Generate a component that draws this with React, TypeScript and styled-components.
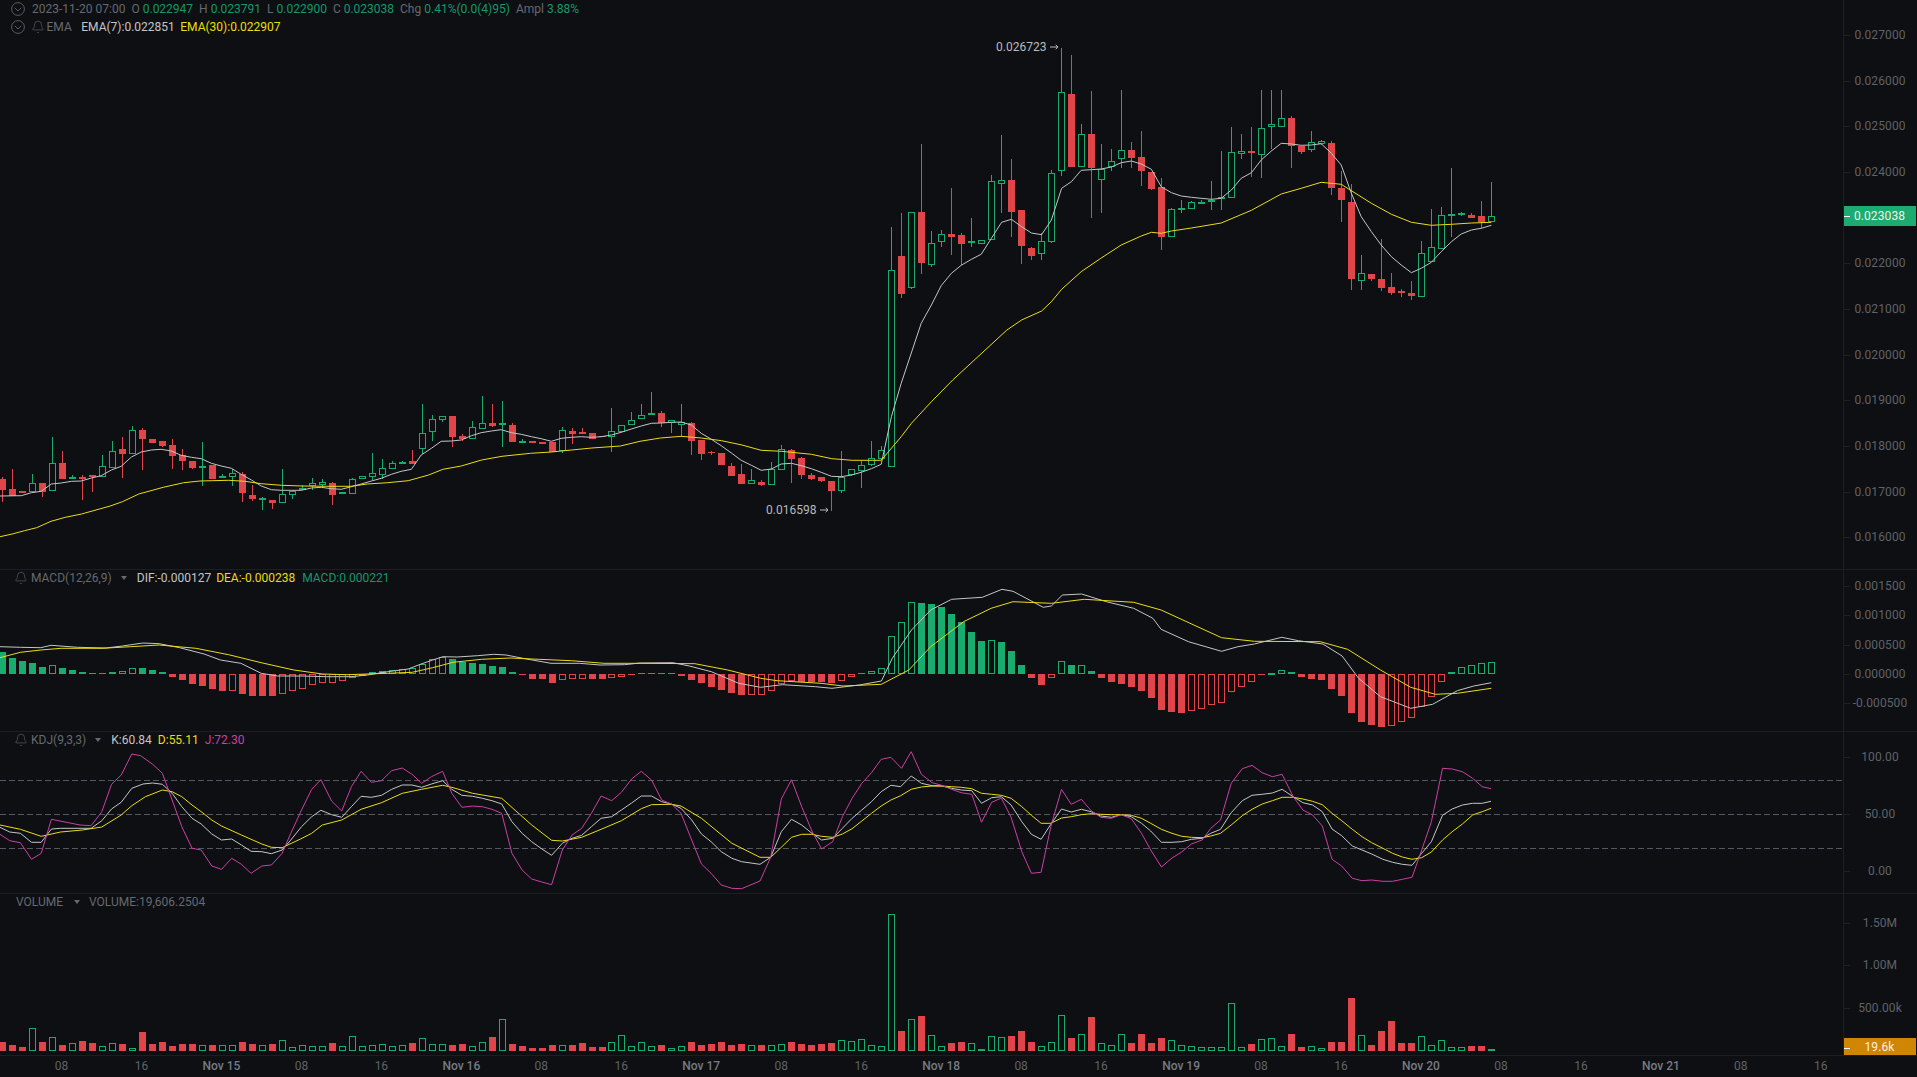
import React from "react";
import styled, { createGlobalStyle } from "styled-components";
import { Bell } from "lucide-react";

const GREEN = "#1aab6f";
const RED = "#df4549";
const YELLOW = "#ebdc14";
const WHITE = "#c4c5c7";
const PINK = "#cb3fa5";
const CHART_W = 1843;

type Pt = [number, number];
const X = (i: number) => Math.floor(2.6 + i * 9.99) + 0.5;
const conv = (a: number[][], xo: number, xs: number, yo: number): Pt[] =>
  a.map(([x, y]) => [xo + x / xs, yo + y / 3] as Pt);
const path = (p: Pt[]) => p.map((q) => `${q[0].toFixed(1)},${q[1].toFixed(1)}`).join(" ");

// [wickTop, bodyTop, bodyBottom, wickBottom, up] in crop coordinates
const C1 = [
  [292,297,330,366,0],[268,327,348,348,0],[333,333,340,340,0],[282,310,335,335,1],[309,309,335,350,0],[172,250,332,332,1],[213,249,297,297,0],[285,292,296,296,1],[285,291,297,360,0],[285,285,291,336,0],
  [224,259,290,290,1],[183,214,263,263,1],[171,207,222,294,0],[138,151,221,221,1],[145,150,177,269,0],[177,177,188,188,0],[183,183,198,202,0],[177,195,228,268,0],[208,225,243,269,0],[243,243,264,267,0],
  [186,259,263,318,1],[255,255,297,297,0],[283,288,293,293,1],[268,280,290,318,1],[277,281,339,365,0],[315,345,357,362,0],[352,355,361,390,1],[360,360,369,386,0],[268,343,368,370,1],[334,334,344,357,1],
  [315,325,330,330,1],[295,310,318,330,1],[296,307,315,320,1],[305,309,345,375,0],[337,337,342,342,1],[295,298,341,341,1],[289,289,298,298,1],[220,280,290,300,1],[238,265,285,298,1],[243,250,266,266,1],
  [243,246,251,251,1],[210,243,251,251,0],[72,160,208,222,1],[106,118,157,183,1],[109,109,119,126,1],[108,108,171,200,0],[162,168,178,182,0],[122,142,176,176,1],[48,130,146,146,1],[72,129,137,140,0],
  [63,130,136,200,1],[129,135,185,185,0],[178,183,185,185,1],[183,183,188,188,0],[186,186,191,191,0],[185,185,216,216,0],[142,151,214,218,1],[144,153,161,192,0],[145,156,161,161,0],[159,159,177,177,0],
  [168,168,172,172,0],[85,154,172,217,1],[136,136,155,155,1],[95,121,136,136,1],[72,106,118,118,1],[36,100,106,106,1],[93,99,128,140,0],[119,119,130,160,1],[72,127,134,170,1],[127,129,182,225,0],
  [180,180,221,241,0],[213,216,220,225,0],[219,219,255,255,0],[250,258,288,288,0],[252,282,312,312,0],[268,299,311,311,1],[300,306,315,318,0],[246,266,314,314,1],[196,208,271,271,1],[207,211,237,309,0],
  [231,234,285,297,0],[280,285,297,299,0],[291,291,303,307,0],[303,303,332,393,0],[213,290,334,339,1],[268,268,285,288,1],[242,256,272,324,1],[183,235,254,258,1],[198,210,238,240,1],
];
const C2 = [
  [591,721,1311,1311,1],[550,679,791,803,0],[545,545,773,778,1],[343,546,698,733,0],[603,640,704,710,1],[600,613,637,650,1],[473,612,621,675,0],[610,615,641,706,0],[564,634,637,650,1],[630,631,641,641,1],
  [435,454,631,631,1],[315,451,463,548,1],[386,450,545,622,0],[540,540,647,701,0],[650,654,677,689,0],[610,634,673,689,1],[420,430,637,640,1],[54,187,424,437,1],[75,192,410,410,0],[283,313,410,410,1],
  [183,312,414,563,0],[343,416,449,550,1],[358,394,410,422,1],[181,361,388,413,1],[337,360,384,413,0],[303,381,422,468,0],[426,426,477,480,0],[445,471,620,661,0],[533,538,620,622,1],[510,535,540,549,1],
  [514,517,536,536,1],[510,517,521,522,1],[453,510,517,540,1],[363,502,508,540,1],[290,367,505,505,1],[313,364,373,388,1],[290,364,369,440,0],[181,295,376,444,1],[181,283,292,357,1],[181,265,290,290,1],
  [257,264,347,414,0],[347,347,365,371,0],[304,337,361,367,1],[330,334,341,345,1],[334,339,473,495,0],[424,474,510,577,0],[461,516,746,780,0],[676,730,753,780,1],[732,732,746,752,0],[628,747,773,782,0],
  [730,771,789,794,0],[778,783,788,800,0],[753,789,797,809,0],[633,670,800,800,1],[538,652,695,695,1],[530,556,657,657,1],[415,552,557,620,1],[545,549,554,558,1],[548,555,563,563,0],[513,558,575,595,0],
  [457,559,575,575,1],
];
const toY = (base: number) => (c: number[]) => [base + c[0] / 3, base + c[1] / 3, base + c[2] / 3, base + c[3] / 3, c[4]];
const CANDLES = [...C1.map(toY(380)), ...C2.map(toY(30))];

const EMA7: Pt[] = [
  ...conv([[0,348],[52,347],[77,338],[101,334],[126,312],[150,309],[175,304],[199,303],[224,294],[248,287],[273,270],[297,259],[322,231],[346,216],[371,210],[395,208],[420,213],[444,226],[469,232],[493,236],[518,250],[542,258],[567,265],[591,283],[616,300],[640,318],[665,329],[689,331],[714,331],[738,331],[763,324],[787,322],[812,326],[836,328],[861,320],[885,312],[910,303],[934,295],[959,283],[983,274],[1008,268],[1032,225],[1057,205],[1081,184],[1106,183],[1130,180],[1155,167],[1179,158],[1204,153],[1228,149],[1253,158],[1277,163],[1302,170],[1326,176],[1351,184],[1375,175],[1400,172],[1424,170],[1449,172],[1473,170],[1498,165],[1522,157],[1547,147]], 0, 2.45, 380),
  ...conv([[3,138],[28,130],[52,129],[77,127],[101,126],[126,135],[150,160],[175,178],[199,197],[224,219],[248,241],[273,256],[297,271],[322,267],[346,252],[371,250],[395,257],[420,266],[444,277],[469,289],[493,290],[518,285],[542,277],[567,266],[591,253],[616,110],[640,10]], 640, 2.45, 380),
  ...conv([[150,880],[175,825],[199,767],[224,730],[248,706],[273,688],[297,673],[322,625],[347,577],[371,568],[396,590],[420,609],[445,614],[469,570],[494,475],[518,455],[542,421],[567,419],[591,417],[616,411],[640,398],[665,393],[689,402],[714,418],[738,470],[763,488],[787,498],[812,502],[836,505],[861,508],[885,505],[910,480],[934,445],[959,428],[983,390],[1008,363],[1032,340],[1057,342],[1081,346],[1106,345],[1130,341],[1155,370],[1179,405],[1204,490],[1228,560],[1253,605],[1277,645],[1302,680],[1326,705],[1351,728],[1375,715],[1400,697],[1424,665],[1449,635],[1473,612],[1498,600],[1522,595],[1547,586]], 860, 2.45, 30),
];
const EMA30: Pt[] = [
  ...conv([[0,470],[30,462],[60,452],[90,443],[125,424],[160,412],[200,402],[270,378],[300,365],[340,342],[400,322],[450,308],[490,303],[520,302],[560,301],[600,304],[640,311],[690,316],[740,318],[800,319],[860,319],[900,312],[950,308],[1000,302],[1050,285],[1085,268],[1130,258],[1180,240],[1230,229],[1300,220],[1351,216],[1400,210],[1450,204],[1520,198]], 0, 2.45, 380),
  ...conv([[0,184],[50,174],[101,169],[150,174],[200,182],[250,195],[297,211],[346,214],[420,223],[470,236],[520,241],[591,241],[640,170],[665,130],[714,65],[766,0]], 640, 2.45, 380),
  ...conv([[360,900],[396,870],[445,843],[469,815],[494,778],[542,725],[590,685],[640,645],[689,618],[714,607],[738,610],[763,603],[812,594],[885,579],[959,541],[1032,492],[1081,475],[1130,457],[1179,463],[1253,520],[1302,553],[1351,577],[1400,586],[1449,583],[1498,579],[1547,577]], 860, 2.45, 30),
];

// MACD bars: [height in crop px (3x), hollow]
const MACD_BARS: number[][] = [
  [66],[48],[39],[33],[21],[26,1],[18],[11],[6],[3],[3],[5],[8,1],[17,1],[18],[12],[5],[-9],[-17],[-30],[-36],[-45],[-50],[-50,1],[-60],[-66],[-66],[-66],[-59,1],[-50,1],[-44,1],[-32,1],[-26,1],[-26,1],[-22,1],[-13,1],[-7],[6],[8],[13,1],[16,1],[17,1],[31,1],[44,1],[52,1],[45],[36],[33],[30],[24],[21],[5],[-4],[-14],[-16],[-27],[-18,1],[-15,1],[-14,1],[-14],[-16],[-13,1],[-10,1],[-4],
  [3],[4],[4],[4],[-5],[-17],[-27],[-38],[-48],[-56],[-62],[-62,1],[-62,1],[-50,1],[-30,1],[-22,1],[-24],[-24],[-24],[-28],[-20,1],[-10,1],[3],[8,1],[17,1],[113,1],[155,1],[215,1],[212],[210],[200],[180],[155],[125],[98],[101,1],[95],[68],[26],[-11],[-32],[-13,1],[38,1],[26],[28,1],[8],[-12],[-23],[-29],[-38],[-50],[-71],[-107],[-113],[-116],[-110,1],[-104,1],[-94,1],[-86,1],[-55,1],[-38,1],[-25,1],[-4],[4,1],[13,1],[5],[-8],[-15],[-18],[-45],[-65],[-116],[-143],[-153],[-158],[-155,1],[-145,1],[-133,1],[-100,1],[-68,1],[-25,1],[5],[20,1],[28,1],[34,1],[37,1],
];
const DIF: Pt[] = [
  ...conv([[0,260],[50,262],[100,263],[125,256],[190,262],[260,264],[300,258],[350,249],[390,251],[440,263],[500,282],[540,300],[590,310],[640,340],[680,348],[740,348],[800,350],[860,350],[900,345],[950,335],[1000,327],[1030,313],[1060,300],[1085,290],[1120,291],[1170,287],[1210,283],[1240,285],[1290,297],[1350,310],[1420,310],[1470,315],[1530,314]], 0, 2.45, 560),
  ...conv([[0,279],[60,278],[90,288],[130,305],[180,340],[220,352],[260,344],[320,350],[350,355],[400,345],[440,333],[460,265],[495,180],[530,120],[568,88],[624,82],[660,58],[680,64],[735,112],[750,108],[770,75],[805,72],[850,95],[900,115],[935,145],[950,178],[1000,215],[1060,244],[1090,230],[1120,222],[1170,202],[1200,212],[1245,222],[1280,258],[1310,325],[1350,380],[1405,415],[1445,403],[1490,362],[1520,348],[1552,338]], 640, 1.823, 570),
];
const DEA: Pt[] = [
  ...conv([[0,293],[50,277],[100,270],[150,265],[250,265],[320,260],[390,255],[480,265],[560,284],[640,308],[720,330],[790,342],[850,344],[950,340],[1010,337],[1060,323],[1110,307],[1180,298],[1250,294],[1320,298],[1400,302],[1480,310]], 0, 2.45, 560),
  ...conv([[0,280],[100,281],[160,300],[220,325],[250,332],[330,340],[370,348],[440,343],[490,300],[530,230],[590,155],[640,115],[680,95],[750,100],[810,88],[900,97],[950,120],[1060,203],[1120,214],[1240,215],[1290,238],[1350,300],[1405,352],[1450,373],[1490,370],[1552,355]], 640, 1.823, 570),
];

const K: Pt[] = [
  ...conv([[0,292],[20,306],[42,310],[65,337],[85,337],[106,297],[125,295],[165,295],[188,295],[210,272],[230,237],[250,217],[272,175],[295,162],[315,159],[335,163],[355,190],[375,230],[396,265],[415,282],[437,312],[457,330],[478,327],[498,345],[518,364],[540,365],[560,371],[582,360],[600,330],[622,290],[643,260],[662,241],[684,254],[705,262],[725,230],[745,199],[766,202],[787,196],[808,178],[830,165],[850,165],[870,172],[890,162],[913,152],[932,178],[953,196],[975,199],[995,205],[1015,212],[1035,222],[1056,275],[1077,310],[1097,335],[1118,357],[1138,376],[1160,340],[1180,325],[1200,316],[1220,290],[1240,265],[1262,260],[1282,240],[1303,219],[1323,198],[1344,198],[1365,215],[1385,222],[1405,235],[1427,270],[1447,312],[1467,335],[1488,365],[1510,385],[1530,395]], 0, 2.063, 730),
  ...conv([[0,403],[22,382],[44,305],[65,268],[86,285],[107,310],[127,330],[150,325],[170,295],[190,265],[210,240],[230,215],[250,185],[270,166],[290,170],[312,138],[333,160],[355,167],[375,168],[395,175],[415,180],[437,182],[457,220],[478,203],[498,200],[518,225],[540,275],[560,313],[580,328],[600,283],[622,237],[642,246],[663,238],[683,245],[703,258],[725,262],[745,254],[766,260],[787,280],[806,303],[828,337],[850,337],[870,335],[890,328],[912,325],[930,310],[950,298],[972,248],[995,212],[1015,196],[1036,193],[1057,189],[1077,178],[1100,200],[1120,218],[1140,225],[1160,245],[1180,297],[1200,317],[1222,348],[1242,360],[1262,372],[1285,388],[1305,397],[1325,403],[1345,406],[1365,370],[1385,335],[1408,256],[1428,237],[1449,225],[1470,220],[1490,220],[1508,214]], 760, 2.063, 730),
];
const D: Pt[] = [
  ...conv([[0,285],[42,298],[85,319],[125,306],[170,300],[210,291],[250,255],[272,227],[300,200],[335,180],[355,185],[375,200],[396,225],[415,245],[437,270],[457,288],[498,315],[540,342],[560,352],[582,353],[620,327],[643,310],[665,285],[705,270],[745,238],[787,218],[830,190],[870,178],[913,166],[932,172],[975,190],[1035,205],[1097,285],[1138,331],[1160,333],[1200,322],[1240,298],[1282,272],[1323,236],[1344,224],[1385,223],[1405,228],[1447,265],[1510,340]], 0, 2.063, 730),
  ...conv([[0,382],[22,382],[44,352],[65,322],[86,313],[107,313],[127,319],[150,322],[170,312],[190,296],[210,273],[230,250],[250,228],[270,210],[290,197],[312,178],[333,171],[355,168],[375,168],[395,170],[415,172],[437,176],[457,190],[478,193],[498,196],[518,205],[540,230],[560,256],[580,280],[600,280],[622,264],[642,260],[663,254],[683,251],[703,253],[725,254],[745,254],[766,256],[787,265],[806,280],[828,298],[850,310],[870,319],[890,322],[912,323],[930,318],[950,310],[972,285],[995,257],[1015,238],[1036,222],[1057,212],[1077,202],[1100,202],[1120,207],[1140,214],[1160,224],[1180,250],[1200,272],[1222,298],[1242,320],[1262,338],[1285,355],[1305,370],[1325,381],[1345,388],[1365,383],[1385,366],[1408,330],[1428,305],[1449,282],[1470,255],[1490,245],[1508,235]], 760, 2.063, 730),
];
const J: Pt[] = [
  ...conv([[0,313],[20,332],[42,338],[65,388],[85,370],[106,268],[165,285],[188,287],[210,245],[230,163],[250,135],[272,72],[290,77],[315,103],[335,130],[355,210],[375,290],[396,355],[415,360],[437,408],[457,418],[478,385],[498,403],[518,430],[540,408],[560,405],[582,370],[600,310],[622,240],[643,178],[662,149],[684,213],[705,243],[725,170],[745,124],[766,157],[787,152],[808,122],[830,114],[850,133],[870,160],[890,140],[913,124],[932,190],[953,232],[975,228],[995,230],[1015,238],[1035,250],[1056,370],[1077,420],[1097,447],[1118,456],[1138,464],[1160,360],[1180,315],[1200,295],[1220,250],[1240,198],[1262,212],[1282,187],[1303,147],[1323,124],[1344,150],[1365,210],[1385,222],[1405,250],[1427,330],[1447,402],[1467,430],[1488,465],[1510,475],[1530,476]], 0, 2.063, 730),
  ...conv([[0,453],[22,382],[44,207],[65,149],[86,230],[107,303],[127,357],[150,335],[170,260],[190,205],[210,160],[230,128],[250,88],[270,82],[292,115],[312,65],[333,133],[355,158],[375,166],[395,178],[415,188],[437,193],[457,277],[478,217],[498,204],[518,262],[540,365],[560,430],[580,427],[600,290],[622,178],[642,223],[663,208],[683,242],[703,262],[725,265],[745,254],[766,266],[787,310],[806,360],[828,411],[850,384],[870,366],[890,342],[912,330],[930,295],[950,270],[972,160],[995,116],[1015,106],[1036,128],[1057,140],[1077,133],[1100,200],[1120,240],[1140,255],[1160,288],[1180,388],[1200,408],[1222,445],[1242,452],[1262,450],[1285,454],[1305,454],[1325,448],[1345,442],[1365,360],[1385,275],[1408,115],[1428,117],[1449,125],[1470,145],[1490,170],[1508,176]], 760, 2.063, 730),
];

// Volume: signed crop height, + up (hollow green), - down (red)
const VOL = [-26,-17,-11,70,-26,43,-17,25,-29,-23,16,25,-20,10,-56,-20,-26,-14,-20,-20,19,-17,19,19,-26,-20,19,-20,34,12,18,16,16,-23,15,45,15,18,21,15,19,-23,40,22,22,-17,-20,15,28,-41,96,-20,-14,-8,-8,-17,19,-17,-23,-11,-11,28,48,16,28,16,-17,10,16,-26,-17,-20,-26,-17,-20,19,-17,19,22,-26,-20,-17,-20,-23,33,31,37,19,16,412,-59,97,-104,49,16,-23,-26,25,6,46,43,-44,-59,-26,16,28,109,-38,52,-101,25,19,52,-23,-50,-23,-38,34,19,16,13,13,13,145,13,-20,37,40,16,-50,-11,16,10,-26,-26,-158,49,-17,-59,-89,-23,-23,46,19,34,13,13,-14,-14,6];

const PRICE_TICKS = ["0.027000","0.026000","0.025000","0.024000",null,"0.022000","0.021000","0.020000","0.019000","0.018000","0.017000","0.016000"];
const TIME_LABELS = Array.from({ length: 23 }, (_, k) => {
  const x = 61.5 + k * 79.97;
  const m = (k + 3) % 3;
  if (m === 2) return { x, text: `Nov ${15 + (k - 2) / 3}`, major: true };
  return { x, text: m === 0 ? "08" : "16", major: false };
});

const Global = createGlobalStyle`
  html, body { margin: 0; padding: 0; background: #0d0f12; overflow: hidden; }
  body { font-family: Roboto, "Liberation Sans", sans-serif; }
`;
const Page = styled.div`
  width: 1917px; height: 1077px; display: flex; flex-direction: column; background: #0d0f12;
  font-size: 12px; color: #666971;
`;
const Pane = styled.section<{ $h: number }>`
  height: ${(p) => p.$h}px; display: flex; border-bottom: 1px solid #1b1e23; box-sizing: content-box; flex: none;
`;
const Plot = styled.div`
  position: relative; width: ${CHART_W}px; flex: none; overflow: hidden;
`;
const Drawing = styled.svg`
  display: block; position: absolute; inset: 0;
`;
const Scale = styled.div`
  position: relative; flex: 1; border-left: 1px solid #1b1e23; overflow: hidden;
`;
const Tick = styled.div`
  position: absolute; left: 0; right: 0; height: 16px; margin-top: -8px; display: flex; align-items: center;
  justify-content: center; color: #5f6269; font-size: 12px; letter-spacing: 0.1px;
  padding-right: 1px;
  &::before { content: ""; position: absolute; left: 0; top: 8px; width: 6px; height: 1px; background: #1e2126; }
`;
const PriceTag = styled.div<{ $bg: string; $h: number }>`
  position: absolute; left: -1px; right: 1px; height: ${(p) => p.$h}px; background: ${(p) => p.$bg};
  color: #f4f1e6; font-size: 12px; display: flex; align-items: center; justify-content: center; letter-spacing: 0.1px;
`;
const TagDash = styled.i`
  position: absolute; left: 1px; width: 6px; height: 1px; background: #fff;
`;
const TimeAxis = styled.div`
  position: relative; height: 21px; flex: none;
`;
const TimeLabel = styled.span<{ $major: boolean }>`
  position: absolute; top: 3px; transform: translateX(-50%); line-height: 15px; font-size: 12px;
  color: ${(p) => (p.$major ? "#787b83" : "#5f6269")}; font-weight: ${(p) => (p.$major ? 500 : 400)};
`;
const Legend = styled.div`
  position: absolute; left: 0; top: 0; display: flex; flex-direction: column;
`;
const Row = styled.div<{ $h: number; $pl: number }>`
  height: ${(p) => p.$h}px; padding-left: ${(p) => p.$pl}px; display: flex; align-items: center; white-space: nowrap;
  line-height: ${(p) => p.$h}px;
`;
const Txt = styled.span<{ $c?: string; $l?: number }>`
  color: ${(p) => p.$c ?? "#666971"}; margin-left: ${(p) => p.$l ?? 0}px;
`;
const Caret = styled.i<{ $l: number; $r: number }>`
  width: 0; height: 0; margin-left: ${(p) => p.$l}px; margin-right: ${(p) => p.$r}px;
  border-left: 3.5px solid transparent; border-right: 3.5px solid transparent; border-top: 4px solid #666971;
`;
const BellIcon = styled(Bell)<{ $l?: number }>`
  color: #5f6269; flex: none; margin-left: ${(p) => p.$l ?? 0}px;
`;
const Extreme = styled.div`
  position: absolute; display: flex; align-items: center; gap: 4px; height: 14px; color: #b9babd; font-size: 12px;
  line-height: 14px; white-space: nowrap;
`;

const Collapse = () => (
  <svg width="14" height="14" viewBox="0 0 14 14" fill="none" stroke="#5a5d64" strokeWidth="1">
    <circle cx="7" cy="7" r="6.4" />
    <path d="M3.8 5.8 7 9 10.2 5.8" />
  </svg>
);
const ArrowGlyph = () => (
  <svg width="9" height="6" viewBox="0 0 9 6" fill="none" stroke="#b9babd" strokeWidth="1">
    <path d="M0 3h8M5.7.8 8 3 5.7 5.2" />
  </svg>
);

const Line = ({ pts, c, yo = 0 }: { pts: Pt[]; c: string; yo?: number }) => (
  <polyline
    points={path(pts.map((p) => [p[0], p[1] - yo] as Pt))}
    fill="none"
    stroke={c}
    strokeWidth="1"
  />
);

function Candle({ i, c }: { i: number; c: number[] }) {
  const x = X(i);
  const [wt, bt, bb, wb, up] = c;
  const col = up ? GREEN : RED;
  const t = Math.round(bt);
  const h = Math.max(1, Math.round(bb) - t);
  return (
    <g>
      {up ? (
        <>
          <line x1={x} x2={x} y1={Math.round(wt)} y2={t} stroke={col} />
          <line x1={x} x2={x} y1={t + h} y2={Math.round(wb)} stroke={col} />
          <rect x={x - 3} y={t + 0.5} width={6} height={Math.max(h - 1, 1)} fill="#0d0f12" stroke={col} />
        </>
      ) : (
        <>
          <line x1={x} x2={x} y1={Math.round(wt)} y2={Math.round(wb)} stroke={col} />
          <rect x={x - 3.5} y={t} width={7} height={h} fill={col} />
        </>
      )}
    </g>
  );
}

function Bar({ x, top, h, up, hollow }: { x: number; top: number; h: number; up: boolean; hollow: boolean }) {
  const col = up ? GREEN : RED;
  if (hollow)
    return <rect x={x - 3} y={top + 0.5} width={6} height={Math.max(h - 1, 1)} fill="none" stroke={col} />;
  return <rect x={x - 3.5} y={top} width={7} height={Math.max(h, 1)} fill={col} />;
}

const ticksAt = (y: number) => ({ top: y });

export default function App() {
  const macdZero = 104; // 674 - 570
  const volBase = 157; // 1051 - 894
  return (
    <Page>
      <Global />
      <Pane $h={569}>
        <Plot>
          <Drawing width={CHART_W} height={569}>
            {CANDLES.map((c, i) => (
              <Candle key={i} i={i} c={c} />
            ))}
            <Line pts={EMA7} c={WHITE} />
            <Line pts={EMA30} c={YELLOW} />
          </Drawing>
          <Legend>
            <Row $h={18} $pl={11}>
              <Collapse />
              <Txt $l={7}>2023-11-20 07:00</Txt>
              <Txt $l={6}>O</Txt><Txt $c="#15986a" $l={3}>0.022947</Txt>
              <Txt $l={6}>H</Txt><Txt $c="#15986a" $l={3}>0.023791</Txt>
              <Txt $l={6}>L</Txt><Txt $c="#15986a" $l={3}>0.022900</Txt>
              <Txt $l={6}>C</Txt><Txt $c="#15986a" $l={3}>0.023038</Txt>
              <Txt $l={6}>Chg</Txt><Txt $c="#15986a" $l={3}>0.41%(0.0(4)95)</Txt>
              <Txt $l={6}>Ampl</Txt><Txt $c="#15986a" $l={3}>3.88%</Txt>
            </Row>
            <Row $h={18} $pl={11}>
              <Collapse />
              <BellIcon size={14} strokeWidth={1.1} $l={6} />
              <Txt $l={1.5}>EMA</Txt>
              <Txt $c="#c4c5c7" $l={9.5}>EMA(7):0.022851</Txt>
              <Txt $c="#ecdd0a" $l={5.5}>EMA(30):0.022907</Txt>
            </Row>
          </Legend>
          <Extreme style={{ left: 996, top: 40 }}>0.026723 <ArrowGlyph /></Extreme>
          <Extreme style={{ left: 766, top: 503 }}>0.016598 <ArrowGlyph /></Extreme>
        </Plot>
        <Scale>
          {PRICE_TICKS.map((t, i) =>
            t ? (
              <Tick key={t} style={ticksAt(35 + i * 45.65)}>{t}</Tick>
            ) : null
          )}
          <PriceTag $bg="#1cab70" $h={20} style={{ top: 206 }}>
            <TagDash style={{ top: 10 }} />0.023038
          </PriceTag>
        </Scale>
      </Pane>

      <Pane $h={161}>
        <Plot>
          <Drawing width={CHART_W} height={161}>
            {MACD_BARS.map((b, i) => {
              const h = Math.round(Math.abs(b[0]) / 3);
              const up = b[0] > 0;
              return (
                <Bar key={i} x={X(i)} top={up ? macdZero - h : macdZero} h={h} up={up} hollow={!!b[1]} />
              );
            })}
            <Line pts={DIF} c={WHITE} yo={570} />
            <Line pts={DEA} c={YELLOW} yo={570} />
          </Drawing>
          <Legend>
            <Row $h={16} $pl={14}>
              <BellIcon size={14} strokeWidth={1.1} />
              <Txt $l={3}>MACD(12,26,9)</Txt>
              <Caret $l={9} $r={10} />
              <Txt $c="#c4c5c7">DIF:-0.000127</Txt>
              <Txt $c="#ecdd0a" $l={5}>DEA:-0.000238</Txt>
              <Txt $c="#15986a" $l={7}>MACD:0.000221</Txt>
            </Row>
          </Legend>
        </Plot>
        <Scale>
          {["0.001500","0.001000","0.000500","0.000000","-0.000500"].map((t, i) => (
            <Tick key={t} style={ticksAt(15.6 + i * 29.45)}>{t}</Tick>
          ))}
        </Scale>
      </Pane>

      <Pane $h={161}>
        <Plot>
          <Drawing width={CHART_W} height={161}>
            {[48, 82, 116].map((y) => (
              <line key={y} x1={0} x2={CHART_W} y1={y + 0.5} y2={y + 0.5} stroke="#55585e" strokeDasharray="6 3" />
            ))}
            <Line pts={K} c={WHITE} yo={732} />
            <Line pts={D} c={YELLOW} yo={732} />
            <Line pts={J} c={PINK} yo={732} />
          </Drawing>
          <Legend>
            <Row $h={16} $pl={14}>
              <BellIcon size={14} strokeWidth={1.1} />
              <Txt $l={3}>KDJ(9,3,3)</Txt>
              <Caret $l={9} $r={10} />
              <Txt $c="#c4c5c7">K:60.84</Txt>
              <Txt $c="#ecdd0a" $l={6}>D:55.11</Txt>
              <Txt $c={PINK} $l={6}>J:72.30</Txt>
            </Row>
          </Legend>
        </Plot>
        <Scale>
          {["100.00","50.00","0.00"].map((t, i) => (
            <Tick key={t} style={ticksAt(25 + i * 56.75)}>{t}</Tick>
          ))}
        </Scale>
      </Pane>

      <Pane $h={161}>
        <Plot>
          <Drawing width={CHART_W} height={161}>
            {VOL.map((v, i) => {
              const h = Math.round(Math.abs(v) / 3);
              return <Bar key={i} x={X(i)} top={volBase - h} h={h} up={v > 0} hollow={v > 0} />;
            })}
          </Drawing>
          <Legend>
            <Row $h={16} $pl={16}>
              <Txt>VOLUME</Txt>
              <Caret $l={11} $r={9} />
              <Txt>VOLUME:19,606.2504</Txt>
            </Row>
          </Legend>
        </Plot>
        <Scale>
          {[["1.50M", 28.7], ["1.00M", 70.7], ["500.00k", 113.7]].map(([t, y]) => (
            <Tick key={t as string} style={ticksAt(y as number)}>{t}</Tick>
          ))}
          <PriceTag $bg="#d08505" $h={17} style={{ top: 144 }}>
            <TagDash style={{ top: 10 }} />19.6k
          </PriceTag>
        </Scale>
      </Pane>

      <TimeAxis>
        {TIME_LABELS.map((l, i) => (
          <TimeLabel key={i} $major={l.major} style={{ left: l.x }}>{l.text}</TimeLabel>
        ))}
      </TimeAxis>
    </Page>
  );
}
